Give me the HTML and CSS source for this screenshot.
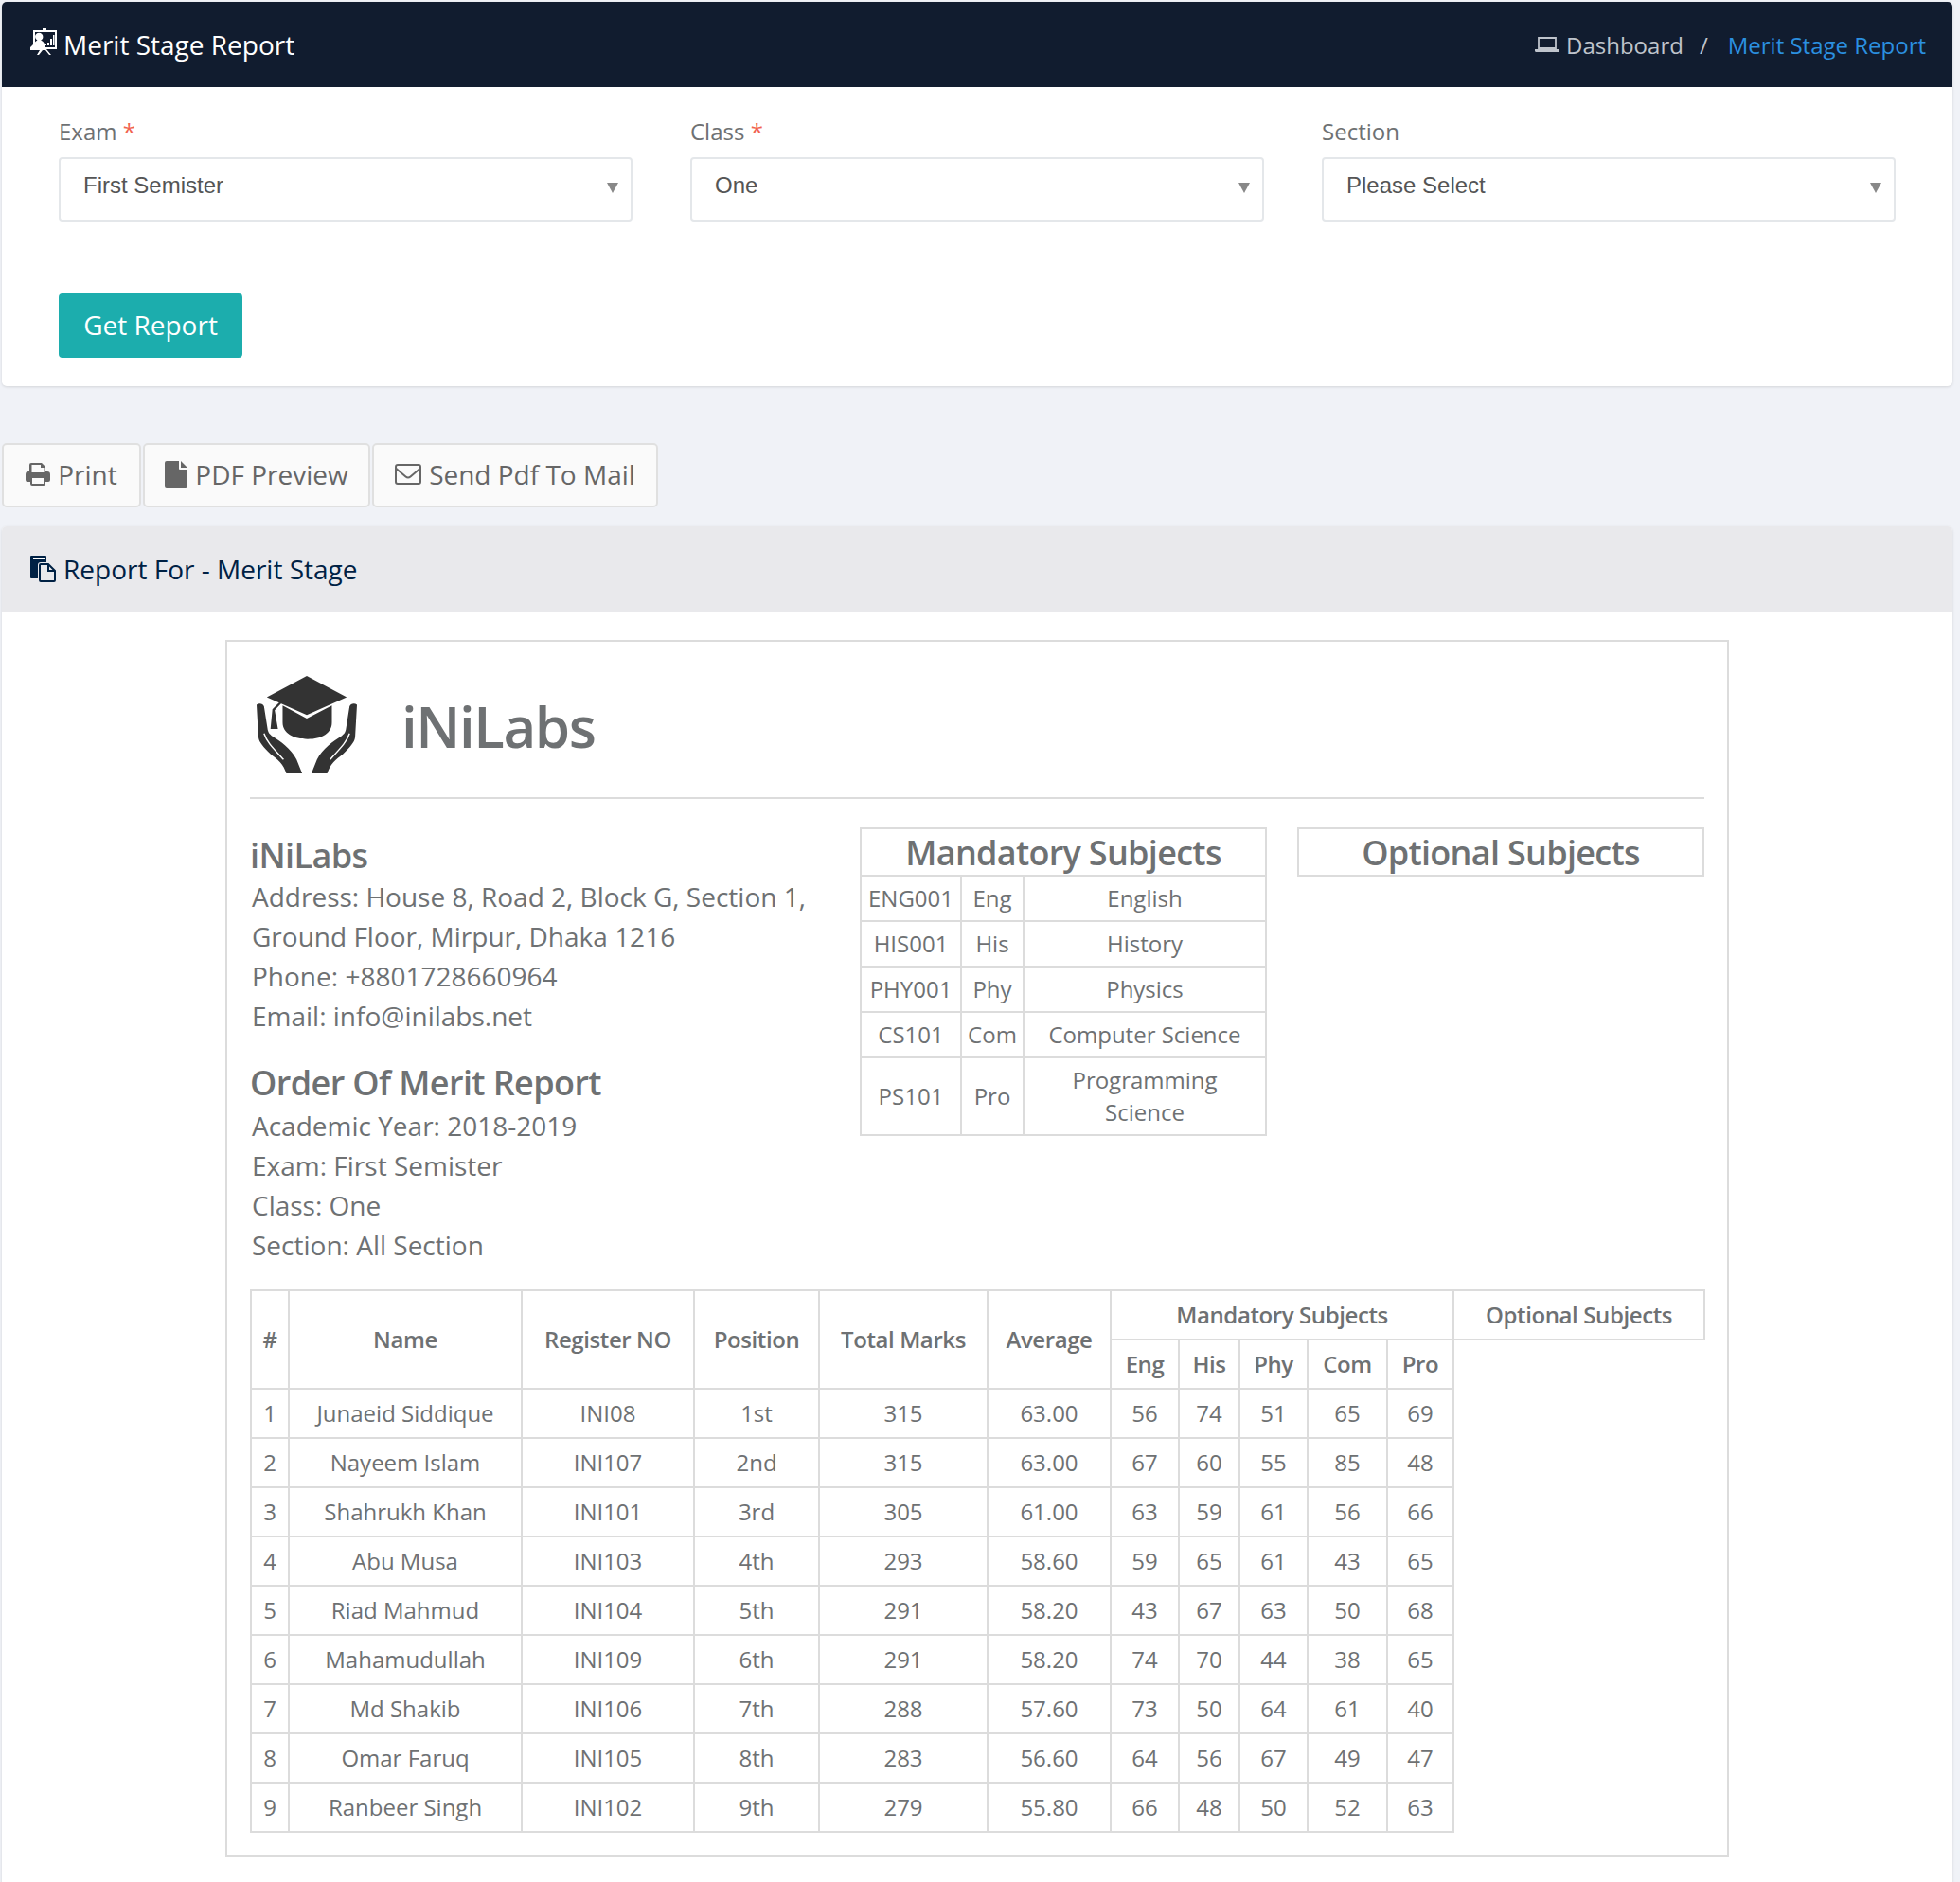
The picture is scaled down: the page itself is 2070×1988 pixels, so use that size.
FILE: index.html
```html
<!DOCTYPE html>
<html lang="en">
<head>
<meta charset="utf-8">
<title>Merit Stage Report</title>
<link rel="stylesheet" href="styles.css">
</head>
<body>
<section class="card filter-card">
  <header class="bar bar-dark">
    <h1 class="bar-title">
      <svg class="ic-board" viewBox="0 0 30 28"><path fill="#fff" d="M13 0h4v2h-4zM3 2h25v20H17l5 6h-2l-4-5h-3l-4 5H7l3-5H0v-3l3-3zM5 4v10.500c1-1 1.600-1.500 2.500-1.700A5 5 0 0 1 5 9a4.200 4.200 0 0 1 8.400 0c0 1.700-1 3-2.300 3.800 1.800.5 3 1.600 3.900 3.700V20H26V4z"/><path fill="#fff" d="M18 15h2v3h-2zM21 11h2v7h-2zM24 7h1.500v11H24zM15.500 16h1.500v2h-1.500z"/></svg>
      Merit Stage Report
    </h1>
    <nav class="crumbs">
      <svg class="ic-laptop" viewBox="0 0 26 16"><path fill="none" stroke="#bfc4cc" stroke-width="1.800" d="M4 1h18v11H4z"/><path fill="#bfc4cc" d="M0 13h26v1.500a1.500 1.500 0 0 1-1.500 1.500h-23A1.500 1.500 0 0 1 0 14.500z"/></svg>
      <span class="crumb">Dashboard</span>
      <span class="crumb-sep">/</span>
      <span class="crumb-active">Merit Stage Report</span>
    </nav>
  </header>
  <div class="filter-body">
    <div class="fields">
      <div class="field">
        <div class="field-label">Exam <span class="req">*</span></div>
        <div class="select"><span>First Semister</span><i class="caret"></i></div>
      </div>
      <div class="field">
        <div class="field-label">Class <span class="req">*</span></div>
        <div class="select"><span>One</span><i class="caret"></i></div>
      </div>
      <div class="field">
        <div class="field-label">Section</div>
        <div class="select"><span>Please Select</span><i class="caret"></i></div>
      </div>
    </div>
    <button class="btn-primary">Get Report</button>
  </div>
</section>

<div class="actions">
  <button class="btn btn-print">
    <svg class="ic" viewBox="0 0 26 24"><path fill="#666" d="M6 0h11l4 4v5h2a3 3 0 0 1 3 3v6a2 2 0 0 1-2 2h-3v2a2 2 0 0 1-2 2H7a2 2 0 0 1-2-2v-2H2a2 2 0 0 1-2-2v-6a3 3 0 0 1 3-3h1V2a2 2 0 0 1 2-2zm.500 2v8h13V5h-3.500V2zM7 16v6h12v-6z"/></svg>
    Print
  </button>
  <button class="btn btn-pdf">
    <svg class="ic ic-file" viewBox="0 0 24 28"><path fill="#666" d="M2 0h13v8a1 1 0 0 0 1 1h8v17a2 2 0 0 1-2 2H2a2 2 0 0 1-2-2V2a2 2 0 0 1 2-2zM17 0l7 7h-7z"/></svg>
    PDF Preview
  </button>
  <button class="btn btn-mail">
    <svg class="ic ic-mail" viewBox="0 0 28 24"><path fill="none" stroke="#666" stroke-width="2" d="M3 2h22a2 2 0 0 1 2 2v16a2 2 0 0 1-2 2H3a2 2 0 0 1-2-2V4a2 2 0 0 1 2-2zM1.500 6l10 8.500c1.500 1.300 3.500 1.300 5 0l10-8.500"/></svg>
    Send Pdf To Mail
  </button>
</div>

<section class="card report-card">
  <header class="bar bar-light">
    <h2 class="bar-title">
      <svg class="ic-files" viewBox="0 0 28 28"><path fill="#002144" d="M1 0h15a1 1 0 0 1 1 1v6h-6a3 3 0 0 0-3 3v14H1a1 1 0 0 1-1-1V1a1 1 0 0 1 1-1z"/><path fill="#fff" d="M3 2h12v2H3z"/><path fill="none" stroke="#002144" stroke-width="2" d="M11 9h8l7 7v10a1 1 0 0 1-1 1H11a1 1 0 0 1-1-1V10a1 1 0 0 1 1-1zM19 9v7h7"/></svg>
      Report For - Merit Stage
    </h2>
  </header>
  <div class="report-body">
    <div class="sheet">
      <div class="brand">
        <svg class="logo" viewBox="0 0 110 105">
          <path fill="#333" d="M55 0 98 23 55 42 12 23z"/>
          <path fill="#333" d="M29 32 55 46 82 32v18c0 12-11 18-26 18S29 62 29 50z"/>
          <path fill="#333" d="M28 26l1.500 1.500-9 9.500 3.500 20h-8l2-21z"/>
          <g>
            <path fill="#333" d="M1 31C4 29 8 30 9 33l4 25c1 4 3 5 5 7 8 5 20 13 26 25l6 15H33c-3-10-9-15-17-21C8 76 4 72 3 66z"/>
            <path fill="none" stroke="#fff" stroke-width="1.500" d="M9 62c3 9 9 15 21 28"/>
          </g>
          <g>
            <path fill="#333" d="M109 31c-3-2-7-1-8 2l-4 25c-1 4-3 5-5 7-8 5-20 13-26 25l-6 15h17c3-10 9-15 17-21 8-8 12-12 13-18z"/>
            <path fill="none" stroke="#fff" stroke-width="1.500" d="M101 62c-3 9-9 15-21 28"/>
          </g>
        </svg>
        <span class="brand-name">iNiLabs</span>
      </div>
      <div class="info">
        <div class="info-left">
          <h3 class="org">iNiLabs</h3>
          <p class="line">Address: House 8, Road 2, Block G, Section 1,<br>Ground Floor, Mirpur, Dhaka 1216</p>
          <p class="line">Phone: +8801728660964</p>
          <p class="line">Email: info@inilabs.net</p>
          <h3 class="report-title">Order Of Merit Report</h3>
          <p class="line">Academic Year: 2018-2019</p>
          <p class="line">Exam: First Semister</p>
          <p class="line">Class: One</p>
          <p class="line">Section: All Section</p>
        </div>
        <div class="subject-col">
          <div class="subject-head">Mandatory Subjects</div>
          <table class="subjects">
            <colgroup><col class="sc1"><col class="sc2"><col class="sc3"></colgroup>
            <tr><td>ENG001</td><td>Eng</td><td>English</td></tr>
            <tr><td>HIS001</td><td>His</td><td>History</td></tr>
            <tr><td>PHY001</td><td>Phy</td><td>Physics</td></tr>
            <tr><td>CS101</td><td>Com</td><td>Computer Science</td></tr>
            <tr><td>PS101</td><td>Pro</td><td>Programming<br>Science</td></tr>
          </table>
        </div>
        <div class="subject-col">
          <div class="subject-head">Optional Subjects</div>
        </div>
      </div>
      <table class="merit">
        <colgroup>
          <col class="m1"><col class="m2"><col class="m3"><col class="m4"><col class="m5"><col class="m6">
          <col class="m7"><col class="m8"><col class="m9"><col class="m10"><col class="m11"><col class="m12">
        </colgroup>
        <thead>
          <tr class="h1">
            <th rowspan="2">#</th><th rowspan="2">Name</th><th rowspan="2">Register NO</th><th rowspan="2">Position</th>
            <th rowspan="2">Total Marks</th><th rowspan="2">Average</th>
            <th colspan="5">Mandatory Subjects</th><th>Optional Subjects</th>
          </tr>
          <tr class="h2"><th>Eng</th><th>His</th><th>Phy</th><th>Com</th><th>Pro</th></tr>
        </thead>
        <tbody>
          <tr><td>1</td><td>Junaeid Siddique</td><td>INI08</td><td>1st</td><td>315</td><td>63.00</td><td>56</td><td>74</td><td>51</td><td>65</td><td>69</td></tr>
          <tr><td>2</td><td>Nayeem Islam</td><td>INI107</td><td>2nd</td><td>315</td><td>63.00</td><td>67</td><td>60</td><td>55</td><td>85</td><td>48</td></tr>
          <tr><td>3</td><td>Shahrukh Khan</td><td>INI101</td><td>3rd</td><td>305</td><td>61.00</td><td>63</td><td>59</td><td>61</td><td>56</td><td>66</td></tr>
          <tr><td>4</td><td>Abu Musa</td><td>INI103</td><td>4th</td><td>293</td><td>58.60</td><td>59</td><td>65</td><td>61</td><td>43</td><td>65</td></tr>
          <tr><td>5</td><td>Riad Mahmud</td><td>INI104</td><td>5th</td><td>291</td><td>58.20</td><td>43</td><td>67</td><td>63</td><td>50</td><td>68</td></tr>
          <tr><td>6</td><td>Mahamudullah</td><td>INI109</td><td>6th</td><td>291</td><td>58.20</td><td>74</td><td>70</td><td>44</td><td>38</td><td>65</td></tr>
          <tr><td>7</td><td>Md Shakib</td><td>INI106</td><td>7th</td><td>288</td><td>57.60</td><td>73</td><td>50</td><td>64</td><td>61</td><td>40</td></tr>
          <tr><td>8</td><td>Omar Faruq</td><td>INI105</td><td>8th</td><td>283</td><td>56.60</td><td>64</td><td>56</td><td>67</td><td>49</td><td>47</td></tr>
          <tr><td>9</td><td>Ranbeer Singh</td><td>INI102</td><td>9th</td><td>279</td><td>55.80</td><td>66</td><td>48</td><td>50</td><td>52</td><td>63</td></tr>
        </tbody>
      </table>
    </div>
  </div>
</section>
</body>
</html>
```
FILE: styles.css
```css
* { box-sizing: border-box; }
html, body { margin: 0; }
body {
  background: #f0f2f7;
  padding: 2px 8px 0 2px;
  font-family: "Open Sans", sans-serif;
  color: #6e7173;
  height: 1988px;
  overflow: hidden;
}
.card {
  background: #fff;
  border-radius: 5px;
  overflow: hidden;
  box-shadow: 0 1px 3px rgba(0,0,0,.12);
}
.bar {
  height: 90px;
  display: flex;
  align-items: center;
  justify-content: space-between;
  padding: 0 28px 0 30px;
}
.bar-dark { background: #111c2f; color: #fff; }
.bar-light { background: #e9e9ec; color: #002144; }
.bar-title {
  margin: 0;
  font-size: 28px;
  font-weight: 400;
  display: flex;
  align-items: center;
  gap: 6px;
}
.ic-board { width: 30px; height: 28px; margin: -6px -1px 0 0; }
.ic-files { width: 28px; height: 28px; margin-right: 1px; }
.crumbs {
  display: flex;
  align-items: center;
  font-size: 24px;
  color: #bfc4cc;
}
.ic-laptop { width: 26px; height: 16px; margin-right: 7px; }
.crumb-sep { margin: 0 21px 0 17px; }
.crumb-active { color: #2b90e0; }
.filter-body { padding: 29px 60px 30px 60px; height: 316px; }
.fields { display: grid; grid-template-columns: repeat(3, 1fr); column-gap: 61px; }
.field-label { font-size: 24px; line-height: 36px; margin-bottom: 9px; }
.req { color: #f1634f; }
.select {
  height: 68px;
  border: 2px solid #e4e7ea;
  border-radius: 4px;
  display: flex;
  justify-content: space-between;
  align-items: center;
  padding: 0 13px 8px 24px;
  font-family: "Liberation Sans", sans-serif;
  font-size: 24px;
  color: #555;
}
.caret {
  width: 0;
  height: 0;
  border-left: 6px solid transparent;
  border-right: 6px solid transparent;
  border-top: 11px solid #888;
  margin-top: 4px;
}
.btn-primary {
  display: block;
  margin-top: 76px;
  width: 194px;
  height: 68px;
  padding: 0 0 2px;
  background: #1cadad;
  color: #fff;
  border: 0;
  border-radius: 4px;
  font-family: inherit;
  font-size: 28px;
}
.actions { display: flex; gap: 2px; margin: 60px 0 20px; }
.btn {
  height: 68px;
  padding: 0 0 2px;
  background: #fafafa;
  border: 2px solid #e0e0e0;
  border-radius: 5px;
  display: flex;
  align-items: center;
  justify-content: center;
  gap: 8px;
  font-family: inherit;
  font-size: 28px;
  color: #666;
}
.btn-print { width: 147px; }
.btn-pdf { width: 240px; }
.btn-mail { width: 302px; }
.ic { width: 26px; height: 24px; }
.ic-file { width: 24px; height: 28px; }
.ic-mail { width: 28px; height: 24px; }
.report-body { padding: 30px 236px 0 236px; background: #fff; height: 1382px; }
.sheet { border: 2px solid #dcdcdc; padding: 24px 24px 26px; height: 1286px; }
.brand {
  display: flex;
  align-items: center;
  height: 142px;
  padding: 6px 0 20px 6px;
  border-bottom: 2px solid #dcdcdc;
  gap: 46px;
  margin-bottom: 30px;
}
.logo { width: 108px; height: 107px; }
.brand-name { font-size: 60px; font-weight: 600; letter-spacing: -1.4px; margin-top: 4px; }
.info { display: grid; grid-template-columns: 612px 430px 430px; column-gap: 32px; height: 488px; }
.org, .report-title { margin: 0; font-size: 36px; font-weight: 600; letter-spacing: -.6px; line-height: 48px; }
.org { margin: 6px 0 -2px; }
.report-title { margin-top: 26px; }
.line { margin: 0; padding-left: 2px; font-size: 28px; line-height: 42px; }
.subject-head {
  border: 2px solid #dcdcdc;
  height: 52px;
  text-align: center;
  font-size: 36px;
  font-weight: 600;
  line-height: 50px;
  letter-spacing: -.7px;
}
.subjects { width: 100%; border-collapse: collapse; table-layout: fixed; margin-top: -2px; }
.subjects td {
  border: 2px solid #dcdcdc;
  text-align: center;
  font-size: 24px;
  line-height: 34px;
  padding: 6px 0;
}
.sc1 { width: 106px; }
.sc2 { width: 66px; }
.merit { border-collapse: collapse; table-layout: fixed; width: 1535px; }
.merit th, .merit td {
  border: 2px solid #dcdcdc;
  text-align: center;
  font-size: 24px;
  padding: 0 0 2px;
}
.merit th { font-weight: 600; letter-spacing: -.4px; }
.h1, .h2 { height: 52px; }
.merit tbody tr { height: 52px; }
.m1 { width: 40px; }
.m2 { width: 246px; }
.m3 { width: 182px; }
.m4 { width: 132px; }
.m5 { width: 178px; }
.m6 { width: 130px; }
.m7 { width: 72px; }
.m8 { width: 64px; }
.m9 { width: 72px; }
.m10 { width: 84px; }
.m11 { width: 70px; }
.m12 { width: 265px; }
```
